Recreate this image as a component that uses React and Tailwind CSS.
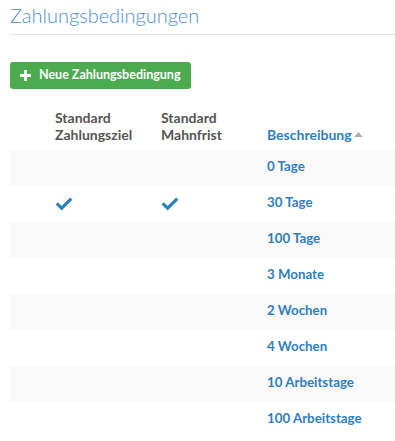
const ROWS = [
  { label: "0 Tage" },
  { label: "30 Tage", ziel: true, mahn: true },
  { label: "100 Tage" },
  { label: "3 Monate" },
  { label: "2 Wochen" },
  { label: "4 Wochen" },
  { label: "10 Arbeitstage" },
  { label: "100 Arbeitstage" },
];

function Check() {
  return (
    <svg viewBox="0 0 18 14" className="h-[14px] w-[18px]" fill="#2b80b9">
      <path d="M0.6 7.6 L2.9 5.3 L6.6 9 L15.1 0.5 L17.4 2.8 L6.6 13.6 Z" />
    </svg>
  );
}

export default function App() {
  return (
    <div
      className="min-h-[441px] w-[395px] overflow-hidden bg-white pl-[10px] text-[13px] text-[#555]"
      style={{ fontFamily: "Lato, 'Open Sans', sans-serif" }}
    >
      <h1 className="border-b border-[#e5e5e5] pb-[8px] pt-[4px] text-[20px] font-light leading-[22px] text-[#4a8fd0]">
        Zahlungsbedingungen
      </h1>

      <button className="mt-[27px] flex h-[27px] items-center gap-[8px] rounded-[3px] bg-[#4cab4f] pl-[10px] pr-[10px] text-[12.5px] font-bold text-white">
        <svg viewBox="0 0 12 12" className="h-[11px] w-[11px]" fill="white">
          <path d="M4.4 0 H7.6 V4.4 H12 V7.6 H7.6 V12 H4.4 V7.6 H0 V4.4 H4.4 Z" />
        </svg>
        Neue Zahlungsbedingung
      </button>

      <table className="mt-[20px] w-full border-collapse">
        <thead>
          <tr className="align-bottom font-bold leading-[17px]">
            <th className="w-[37px]" />
            <th className="w-[106px] px-[8px] pb-[7px] text-left text-[14px] font-bold">
              Standard
              <br />
              Zahlungsziel
            </th>
            <th className="w-[106px] px-[8px] pb-[7px] text-left text-[14px] font-bold">
              Standard
              <br />
              Mahnfrist
            </th>
            <th className="px-[8px] pb-[7px] text-left text-[14px] font-bold text-[#2e7fbd]">
              <span className="inline-flex items-center gap-[2px]">
                Beschreibung
                <svg viewBox="0 0 10 6" className="h-[5px] w-[9px]" fill="#aaa">
                  <path d="M0 6 L5 0 L10 6 Z" />
                </svg>
              </span>
            </th>
          </tr>
        </thead>
        <tbody>
          {ROWS.map((r, i) => (
            <tr key={r.label} className={i % 2 === 0 ? "h-[36px] bg-[#f9f9f9]" : "h-[36px]"}>
              <td />
              <td className="px-[8px]">{r.ziel && <Check />}</td>
              <td className="px-[8px]">{r.mahn && <Check />}</td>
              <td className="px-[8px] pb-[3px] text-[13.3px] font-bold text-[#2e7fbd]">{r.label}</td>
            </tr>
          ))}
        </tbody>
      </table>
    </div>
  );
}
